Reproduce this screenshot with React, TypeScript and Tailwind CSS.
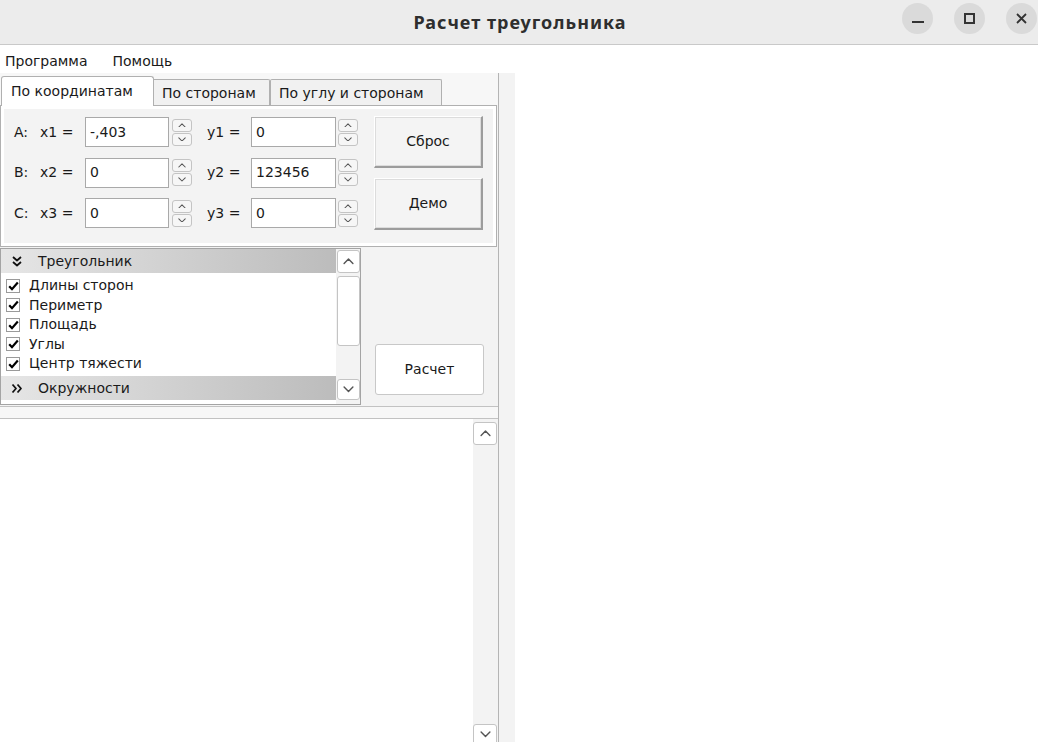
import React from 'react';

const FONT = "font-['DejaVu_Sans','Noto_Sans',sans-serif]";

function Chevron({ dir = 'up', size = 10 }: { dir?: 'up' | 'down'; size?: number }) {
  return (
    <svg width={size} height={size * 0.6} viewBox="0 0 10 6" fill="none">
      <path
        d={dir === 'up' ? 'M1 5L5 1L9 5' : 'M1 1L5 5L9 1'}
        stroke="#555"
        strokeWidth="1.3"
        strokeLinecap="round"
        strokeLinejoin="round"
      />
    </svg>
  );
}

function DoubleChevron({ down }: { down?: boolean }) {
  return (
    <svg width="12" height="11" viewBox="0 0 12 11" fill="none" className={down ? 'rotate-90' : ''}>
      <path d="M1.5 1.5L5 5.5L1.5 9.5M6.5 1.5L10 5.5L6.5 9.5" stroke="#111" strokeWidth="1.8" strokeLinejoin="round" />
    </svg>
  );
}

function Spinner({ ml }: { ml: string }) {
  return (
    <div className={`flex flex-col gap-[1px] w-[20px] ${ml}`}>
      <div className="h-[13px] flex items-center justify-center bg-[#f6f6f6] border border-[#c4c4c4] rounded-[3px]">
        <Chevron dir="up" size={8} />
      </div>
      <div className="h-[13px] flex items-center justify-center bg-[#f6f6f6] border border-[#c4c4c4] rounded-[3px]">
        <Chevron dir="down" size={8} />
      </div>
    </div>
  );
}

function Field({ value, w }: { value: string; w: string }) {
  return (
    <div className={`${w} h-[30px] bg-white border border-[#a9a9a9] flex items-center pl-[4px] text-[14px] text-[#1a1a1a]`}>
      {value}
    </div>
  );
}

function CoordRow({ p, x, y, xv, yv }: { p: string; x: string; y: string; xv: string; yv: string }) {
  return (
    <div className="flex items-center h-[30px]">
      <span className="w-[36px] pl-[10px] text-[14px]">{p}</span>
      <span className="w-[45px] text-[14px] whitespace-nowrap">{x}</span>
      <Field value={xv} w="w-[84px]" />
      <Spinner ml="ml-[3px]" />
      <span className="w-[59px] pl-[15px] text-[14px] whitespace-nowrap">{y}</span>
      <Field value={yv} w="w-[85px]" />
      <Spinner ml="ml-[2px]" />
    </div>
  );
}

function RaisedButton({ label }: { label: string }) {
  return (
    <div className="w-[109px] h-[52px] flex items-center justify-center bg-[#f4f4f4] border-t border-l border-white border-r-2 border-b-2 border-r-[#9c9c9c] border-b-[#9c9c9c] shadow-[inset_0_0_0_1px_#dcdcdc] text-[14px]">
      {label}
    </div>
  );
}

function CheckItem({ label }: { label: string }) {
  return (
    <div className="h-[19.5px] flex items-center pl-[5px]">
      <div className="w-[14px] h-[14px] bg-white border border-[#9a9a9a] flex items-center justify-center">
        <svg width="11" height="10" viewBox="0 0 11 10">
          <path d="M1.2 5.2L4 8.2L9.8 1.5" stroke="#000" strokeWidth="2.2" fill="none" />
        </svg>
      </div>
      <span className="ml-[9px] text-[14px] text-[#1a1a1a]">{label}</span>
    </div>
  );
}

function GroupHeader({ label, open }: { label: string; open?: boolean }) {
  return (
    <div className="h-[24px] flex items-center bg-gradient-to-r from-[#e6e6e6] to-[#bcbcbc]">
      <div className="w-[37px] flex justify-start pl-[10px]">
        <DoubleChevron down={open} />
      </div>
      <span className="text-[14px] text-[#1a1a1a]">{label}</span>
    </div>
  );
}

export default function App() {
  return (
    <div className={`w-[1038px] h-[742px] overflow-hidden bg-white ${FONT} text-[#1a1a1a]`}>
      {/* title bar */}
      <div className="h-[45px] bg-[#ececec] border-b border-[#c9c9c9] flex items-center relative">
        <div className="flex-1 text-center text-[18px] font-bold tracking-[1px] text-[#2e2e2e] pl-[2px] font-['Noto_Sans',sans-serif]">
          Расчет треугольника
        </div>
        <div className="absolute right-[1px] top-[3px] flex gap-[21px]">
          <div className="w-[31px] h-[31px] rounded-full bg-[#dadada] flex items-center justify-center">
            <div className="w-[12px] h-[2px] bg-[#333] mt-[7px]" />
          </div>
          <div className="w-[31px] h-[31px] rounded-full bg-[#dadada] flex items-center justify-center">
            <div className="w-[11px] h-[11px] border-2 border-[#333]" />
          </div>
          <div className="w-[31px] h-[31px] rounded-full bg-[#dadada] flex items-center justify-center">
            <svg width="11" height="11" viewBox="0 0 11 11">
              <path d="M1 1L10 10M10 1L1 10" stroke="#333" strokeWidth="1.8" />
            </svg>
          </div>
        </div>
      </div>

      {/* menu */}
      <div className="h-[28px] flex items-center text-[14px] pt-[4px]">
        <span className="ml-[5px]">Программа</span>
        <span className="ml-[25px]">Помощь</span>
      </div>

      <div className="flex h-[669px]">
        <div className="w-[498px] flex flex-col bg-[#f3f3f3]">
          {/* tabs */}
          <div className="h-[32px] flex items-end pl-[1px] bg-[#f7f7f7]">
            <div className="w-[153px] h-[30px] bg-white border border-b-0 border-[#b0b0b0] rounded-t-[3px] pl-[9px] pt-[4px] text-[14px] relative top-[1px]">
              По координатам
            </div>
            <div className="w-[116px] h-[26px] bg-[#f1f1f1] border border-b-0 border-l-0 border-[#b0b0b0] rounded-tr-[2px] pl-[8px] pt-[3px] text-[14px]">
              По сторонам
            </div>
            <div className="w-[172px] h-[26px] bg-[#f1f1f1] border border-b-0 border-[#b0b0b0] rounded-t-[2px] pl-[8px] pt-[3px] text-[14px]">
              По углу и сторонам
            </div>
          </div>

          {/* tab pane */}
          <div className="h-[142px] border border-[#b0b0b0] bg-white p-[3px] mr-[1px]">
            <div className="h-full bg-[#f3f3f3] flex pt-[8px]">
              <div className="flex flex-col gap-[10.5px]">
                <CoordRow p="A:" x="x1 =" y="y1 =" xv="-,403" yv="0" />
                <CoordRow p="B:" x="x2 =" y="y2 =" xv="0" yv="123456" />
                <CoordRow p="C:" x="x3 =" y="y3 =" xv="0" yv="0" />
              </div>
              <div className="ml-[16px] flex flex-col gap-[10px] -mt-[1px]">
                <RaisedButton label="Сброс" />
                <RaisedButton label="Демо" />
              </div>
            </div>
          </div>

          {/* lower section */}
          <div className="h-[158px] flex pt-[1px]">
            <div className="w-[361px] h-[157px] border border-[#a4a4a4] bg-white flex">
              <div className="w-[335px] flex flex-col">
                <GroupHeader label="Треугольник" open />
                <div className="h-[103px] pt-[3px]">
                  <CheckItem label="Длины сторон" />
                  <CheckItem label="Периметр" />
                  <CheckItem label="Площадь" />
                  <CheckItem label="Углы" />
                  <CheckItem label="Центр тяжести" />
                </div>
                <GroupHeader label="Окружности" />
              </div>
              <div className="flex-1 bg-[#f3f3f3] flex flex-col pt-[1px] pl-[1px]">
                <div className="w-[23px] h-[23px] bg-white border border-[#c4c4c4] rounded-[3px] flex items-center justify-center">
                  <Chevron dir="up" size={11} />
                </div>
                <div className="w-[23px] h-[70px] mt-[3px] bg-white border border-[#c4c4c4] rounded-[3px]" />
                <div className="w-[23px] h-[21px] mt-[33px] bg-white border border-[#c4c4c4] rounded-[3px] flex items-center justify-center">
                  <Chevron dir="down" size={11} />
                </div>
              </div>
            </div>
            <div className="flex-1 flex flex-col items-center pt-[96px]">
              <div className="w-[109px] h-[51px] bg-white border border-[#c8c8c8] rounded-[3px] flex items-center justify-center text-[14px]">
                Расчет
              </div>
            </div>
          </div>

          {/* splitter */}
          <div className="h-[13px] border-t border-b border-[#c2c2c2] bg-[#f7f7f7] mt-[1px]" />

          {/* output area */}
          <div className="flex-1 bg-white flex justify-end">
            <div className="w-[25px] bg-[#f3f3f3] flex flex-col justify-between pt-[3px] pr-[1px]">
              <div className="w-[24px] h-[23px] bg-white border border-[#c4c4c4] rounded-[3px] flex items-center justify-center">
                <Chevron dir="up" size={11} />
              </div>
              <div className="w-[24px] h-[21px] bg-white border border-[#c4c4c4] rounded-[3px] flex items-center justify-center -mb-[3px]">
                <Chevron dir="down" size={11} />
              </div>
            </div>
          </div>
        </div>
        <div className="w-[17px] bg-[#f3f3f3] border-l border-[#b4b4b4]" />
      </div>
    </div>
  );
}
